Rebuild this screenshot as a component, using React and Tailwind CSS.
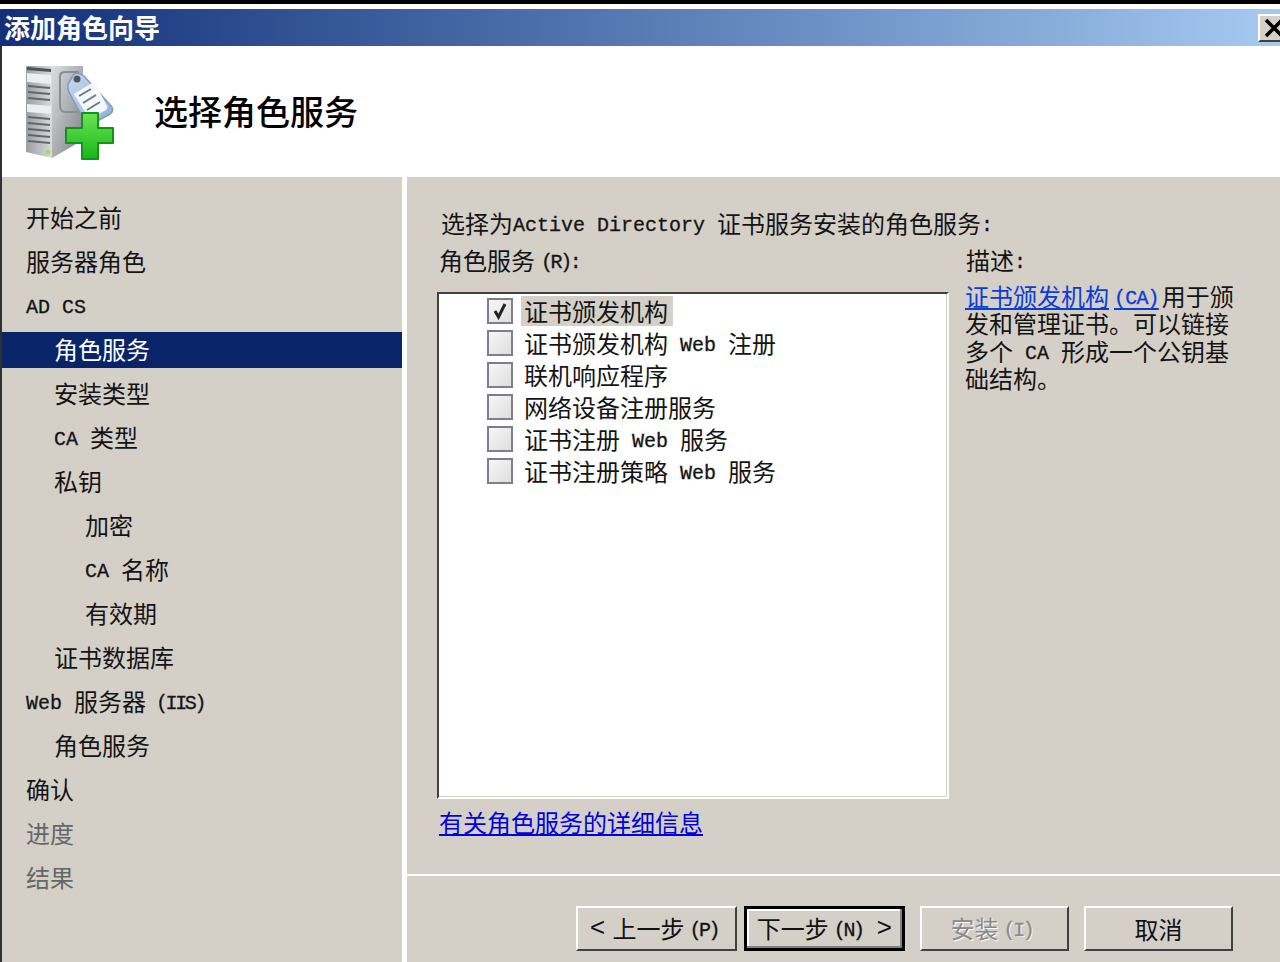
const cjk = { fontFamily: '"Noto Sans CJK SC", "Liberation Sans", sans-serif' };

function M({ children, tight, mid }) {
  // 等宽西文，宽度 12px；括号那几处原图更窄
  return (
    <span className={`align-[2px] font-['Liberation_Mono',monospace] text-[20px] leading-none whitespace-pre [-webkit-text-stroke:0.3px] ${tight ? 'tracking-[-2.4px]' : ''} ${mid ? 'tracking-[-0.8px]' : ''}`}>
      {children}
    </span>
  );
}

const navItems = [
  { key: 'start', level: 0, label: '开始之前' },
  { key: 'roles', level: 0, label: '服务器角色' },
  { key: 'adcs', level: 0, label: <M>AD CS</M> },
  { key: 'svc', level: 1, label: '角色服务', active: true },
  { key: 'setup', level: 1, label: '安装类型' },
  { key: 'catype', level: 1, label: <><M>CA </M>类型</> },
  { key: 'key', level: 1, label: '私钥' },
  { key: 'enc', level: 2, label: '加密' },
  { key: 'caname', level: 2, label: <><M>CA </M>名称</> },
  { key: 'valid', level: 2, label: '有效期' },
  { key: 'db', level: 1, label: '证书数据库' },
  { key: 'iis', level: 0, label: <><M>Web </M>服务器<span className="ml-[10px]"><M tight>(IIS)</M></span></> },
  { key: 'iissvc', level: 1, label: '角色服务' },
  { key: 'confirm', level: 0, label: '确认' },
  { key: 'progress', level: 0, label: '进度', muted: true },
  { key: 'result', level: 0, label: '结果', muted: true },
];

const services = [
  { key: 'ca', label: '证书颁发机构', checked: true },
  { key: 'caweb', label: <>证书颁发机构<M> Web </M>注册</> },
  { key: 'ocsp', label: '联机响应程序' },
  { key: 'ndes', label: '网络设备注册服务' },
  { key: 'ces', label: <>证书注册<M> Web </M>服务</> },
  { key: 'cep', label: <>证书注册策略<M> Web </M>服务</> },
];

const levelClass = ['pl-[24px]', 'pl-[52px]', 'pl-[83px]'];

function ServerIcon() {
  return (
    <svg width="100" height="100" viewBox="22 62 100 100">
      <defs>
        <linearGradient id="front" x1="0" y1="0" x2="1" y2="0">
          <stop offset="0" stopColor="#9a9ea3" />
          <stop offset="1" stopColor="#d9dbdd" />
        </linearGradient>
        <linearGradient id="side" x1="0" y1="0" x2="1" y2="1">
          <stop offset="0" stopColor="#dcdee0" />
          <stop offset="1" stopColor="#7b8084" />
        </linearGradient>
        <linearGradient id="plus" x1="0" y1="0" x2="0" y2="1">
          <stop offset="0" stopColor="#6be254" />
          <stop offset="1" stopColor="#18b818" />
        </linearGradient>
        <linearGradient id="tag" x1="0" y1="0" x2="1" y2="1">
          <stop offset="0" stopColor="#c9d8ec" />
          <stop offset="1" stopColor="#8fb0d6" />
        </linearGradient>
      </defs>
      <path d="M52 66 L83 66 L83 140 L52 158 Z" fill="url(#side)" />
      <path d="M60 76 Q60 72 66 72 L78 72 L78 112 L66 112 Q60 112 60 106 Z" fill="none" stroke="#8a8e92" strokeWidth="2" />
      <path d="M26 66 L52 66 L52 158 L26 152 Z" fill="url(#front)" />
      <path d="M27 67 L51 69 L51 72 L27 70 Z" fill="#4f5357" />
      <path d="M27 73 L51 75 L51 84 L27 82 Z" fill="#eceeef" />
      <path d="M27 104 L51 106 L51 114 L27 112 Z" fill="#eceeef" />
      <path d="M28 86 L50 88 M28 92 L50 94 M28 98 L50 100" stroke="#62666a" strokeWidth="2" />
      <path d="M28 117 L50 119 M28 123 L50 125 M28 129 L50 131 M28 135 L50 137 M28 141 L50 143" stroke="#62666a" strokeWidth="2" />
      <circle cx="48" cy="152" r="2.5" fill="#9be05a" />
      <path d="M74 74 Q78 72 84 76 L112 107 Q114 111 110 114 L92 124 Q88 126 85 122 L69 92 Q67 88 68 84 Z" fill="url(#tag)" stroke="#7d9cc4" strokeWidth="1.5" />
      <path d="M74 94 L92 83 Q94 82 96 85 L107 106 Q108 108 106 110 L92 118 Q90 119 88 117 Z" fill="#f4f7fb" />
      <circle cx="77" cy="79" r="3.5" fill="#50565e" />
      <path d="M79 96 L91 89 M83 103 L96 95 M87 110 L100 102" stroke="#6a7a90" strokeWidth="2" />
      <path d="M82 113 L98 113 L98 128 L113 128 L113 143 L98 143 L98 159 L82 159 L82 143 L66 143 L66 128 L82 128 Z" fill="url(#plus)" stroke="#14921a" strokeWidth="2" strokeLinejoin="round" />
    </svg>
  );
}

function CheckBox({ checked }) {
  return (
    <span className="flex h-[26px] w-[26px] shrink-0 items-center justify-center border-2 border-[#7f7f8c] bg-gradient-to-br from-[#f7f7f7] to-[#dedede]">
      {checked ? (
        <svg width="18" height="18" viewBox="0 0 18 18">
          <path d="M4 9 L7.5 15 L14 2" fill="none" stroke="#222" strokeWidth="3" />
        </svg>
      ) : null}
    </span>
  );
}

function WizardButton({ children, primary, disabled, className }) {
  const frame = primary
    ? 'border-[3px] border-black shadow-[inset_-2px_-2px_0_#808080,inset_2px_2px_0_#fff]'
    : 'border-2 border-t-white border-l-white border-r-[#404040] border-b-[#404040]';
  const text = disabled ? 'text-[#8a8a8a] [text-shadow:1px_1px_0_#fff]' : 'text-[#111]';
  return (
    <button type="button" className={`flex h-[45px] items-center justify-center bg-[#d4d0c8] text-[24px] leading-none ${frame} ${text} ${className}`}>
      {children}
    </button>
  );
}

function Arrow({ children }) {
  return <span className="font-['Liberation_Mono',monospace] text-[26px] leading-none">{children}</span>;
}

export default function App() {
  return (
    <div className="h-[962px] w-[1280px] overflow-hidden bg-white text-[24px] text-[#141414]" style={cjk}>
      <div className="h-[4px] bg-black" />
      <div className="h-[5px] bg-white" />

      <div className="flex h-[37px] items-center justify-between bg-gradient-to-r from-[#142f78] to-[#a6caf0] pl-[4px] text-[26px] font-bold leading-none text-white">
        <span className="pb-[2px]">添加角色向导</span>
        <button type="button" className="flex h-[28px] w-[22px] items-center overflow-hidden border-l-2 border-t-2 border-b-2 border-l-white border-t-white border-b-[#404040] bg-[#d4d0c8] pl-[4px]">
          <svg width="22" height="20" viewBox="0 0 22 20" className="shrink-0">
            <path d="M2 2 L18 18 M18 2 L2 18" stroke="#000" strokeWidth="3.5" />
          </svg>
        </button>
      </div>

      <div className="border-l-2 border-[#303030]">
        <div className="flex h-[131px] items-center gap-[32px] pl-[20px]">
          <ServerIcon />
          <h1 className="pb-[2px] text-[34px] font-medium leading-none text-black">选择角色服务</h1>
        </div>

        <div className="flex gap-[5px]">
          <nav className="h-[785px] w-[400px] shrink-0 bg-[#d4d0c8] pt-[23px]">
            {navItems.map((item) => (
              <div
                key={item.key}
                className={`mb-[8px] flex h-[36px] items-center pb-[2px] ${levelClass[item.level]} ${item.active ? 'bg-[#0a246a] text-white' : ''} ${item.muted ? 'text-[#666]' : ''}`}
              >
                <span>{item.label}</span>
              </div>
            ))}
          </nav>

          <main className="h-[785px] flex-1 bg-[#d4d0c8] pt-[31px]">
            <div className="pl-[30px]">
              <p className="flex h-[32px] items-center pb-[2px] pl-[4px] leading-none">
                <span>选择为<M>Active Directory </M>证书服务安装的角色服务<M>:</M></span>
              </p>
              <div className="mt-[4px] flex gap-[16px]">
                <section className="w-[512px] shrink-0">
                  <p className="flex h-[32px] items-center pl-[2px] leading-none">
                    <span>角色服务<span className="ml-[6px]"><M tight>(R):</M></span></span>
                  </p>
                  <div className="mt-[16px] h-[507px] border-2 border-t-[#404040] border-l-[#404040] border-r-white border-b-white bg-white pt-[1px] pl-[48px] shadow-[inset_-1px_-1px_0_#d4d0c8]">
                    {services.map((s) => (
                      <div key={s.key} className="flex h-[32px] items-center gap-[8px]">
                        <CheckBox checked={s.checked} />
                        <span className={`flex h-[30px] items-center pl-[3px] pr-[5px] leading-none ${s.checked ? 'bg-[#d4d0c8]' : ''}`}>
                          <span>{s.label}</span>
                        </span>
                      </div>
                    ))}
                  </div>
                  <a className="mt-[7px] flex h-[32px] items-center pl-[2px] leading-none text-[#0000e0] underline" href="#more">
                    有关角色服务的详细信息
                  </a>
                </section>

                <section className="flex-1">
                  <p className="flex h-[32px] items-center pl-[1px] leading-none">
                    <span>描述<M>:</M></span>
                  </p>
                  <p className="mt-[6px] whitespace-nowrap leading-[27.4px]">
                    <a className="text-[#0a3cd8] underline" href="#ca">证书颁发机构<span className="pl-[5px]"><M mid>(CA)</M></span><span className="pl-[3px]" /></a>
                    <span>用于颁</span>
                    <br />
                    发和管理证书。可以链接
                    <br />
                    多个<M> CA </M>形成一个公钥基
                    <br />
                    础结构。
                  </p>
                </section>
              </div>
            </div>

            <footer className="mt-[36px] border-t-2 border-white pt-[30px] pl-[169px]">
              <div className="flex">
                <WizardButton className="w-[161px] gap-[7px] pr-[5px]"><Arrow>&lt;</Arrow><span>上一步<span className="ml-[5px]"><M tight>(P)</M></span></span></WizardButton>
                <WizardButton primary className="ml-[7px] w-[161px] gap-[14px]"><span>下一步<span className="ml-[5px]"><M tight>(N)</M></span></span><Arrow>&gt;</Arrow></WizardButton>
                <WizardButton disabled className="ml-[15px] w-[149px] pr-[6px]"><span>安装<span className="ml-[5px]"><M tight>(I)</M></span></span></WizardButton>
                <WizardButton className="ml-[15px] w-[149px]">取消</WizardButton>
              </div>
            </footer>
          </main>
        </div>
      </div>
    </div>
  );
}
